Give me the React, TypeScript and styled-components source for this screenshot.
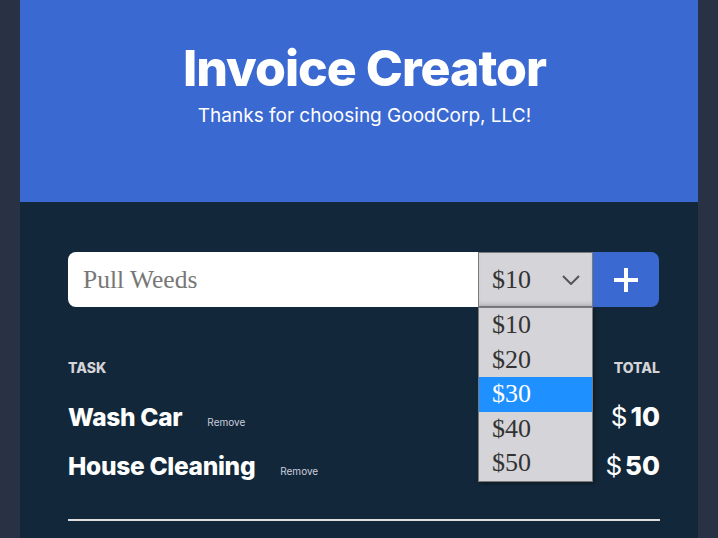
import React, { useState } from 'react';
import styled, { createGlobalStyle } from 'styled-components';

const GlobalStyle = createGlobalStyle`
    html, body {
        margin: 0;
        padding: 0;
        background: #283244;
        font-family: Inter, 'Noto Sans', sans-serif;
    }
`;

const Page = styled.div`
    width: 678px;
    height: 538px;
    margin: 0 auto;
    background: #12283a;
    overflow: hidden;
`;

const Header = styled.header`
    height: 202px;
    background: #3b69d2;
    color: #fff;
    display: flex;
    flex-direction: column;
    align-items: center;
    box-sizing: border-box;
    padding: 39px 0 0 11px;
`;

const Title = styled.h1`
    margin: 0;
    font-size: 50px;
    font-weight: 800;
    letter-spacing: -1px;
    line-height: 58px;
`;

const Subtitle = styled.p`
    margin: 7px 0 0;
    font-size: 19px;
    line-height: 24px;
`;

const Body = styled.main`
    padding: 50px 38px 0 48px;
`;

const Form = styled.div`
    display: flex;
    height: 55px;
    position: relative;
`;

const Input = styled.input`
    width: 410px;
    box-sizing: border-box;
    border: none;
    border-radius: 8px 0 0 8px;
    padding: 0 15px;
    font-family: 'Liberation Serif', serif;
    font-size: 25.5px;
    color: #222;
    outline: none;
    &::placeholder {
        color: #777;
    }
`;

const SelectBox = styled.div`
    position: relative;
    width: 115px;
    box-sizing: border-box;
    background: #d5d4d8;
    border: 1px solid #7a7a7a;
    box-shadow: inset 0 -4px 4px -2px rgba(0, 0, 0, 0.15);
    display: flex;
    align-items: center;
    justify-content: space-between;
    padding: 0 12px 0 13px;
    font-family: 'Liberation Serif', serif;
    font-size: 26px;
    color: #333;
`;

const Dropdown = styled.ul`
    position: absolute;
    top: 54px;
    left: -1px;
    width: 115px;
    box-sizing: border-box;
    margin: 0;
    padding: 0;
    list-style: none;
    background: #d5d4d8;
    border: 1px solid #7a7a7a;
    box-shadow: 2px 2px 4px rgba(0, 0, 0, 0.35);
    z-index: 2;
`;

const Option = styled.li<{ $active?: boolean }>`
    height: 34.6px;
    line-height: 33px;
    padding-left: 13px;
    font-family: 'Liberation Serif', serif;
    font-size: 26px;
    color: ${(p) => (p.$active ? '#fff' : '#333')};
    background: ${(p) => (p.$active ? '#1e90ff' : 'transparent')};
`;

const AddButton = styled.button`
    width: 66px;
    border: none;
    border-radius: 0 8px 8px 0;
    background: #3b69d2;
    display: flex;
    align-items: center;
    justify-content: center;
    padding: 0;
    cursor: pointer;
`;

const Table = styled.section`
    margin-top: 52px;
    width: 592px;
`;

const HeadRow = styled.div`
    display: flex;
    justify-content: space-between;
    font-size: 14px;
    font-weight: 800;
    color: #d4d4d8;
    margin-bottom: 25px;
`;

const Row = styled.div`
    display: flex;
    align-items: baseline;
    height: 49px;
    color: #fff;
`;

const TaskName = styled.span`
    font-size: 24.5px;
    font-weight: 800;
    letter-spacing: -0.3px;
`;

const RemoveLink = styled.button`
    margin-left: 25px;
    background: none;
    border: none;
    padding: 0;
    color: #ccd;
    font-family: Inter, sans-serif;
    font-size: 10px;
    cursor: pointer;
`;

const Price = styled.span`
    margin-left: auto;
    font-size: 26px;
    font-weight: 800;
`;

const Dollar = styled.span`
    font-weight: 400;
    margin-right: 3px;
`;

const Divider = styled.hr`
    margin: 20px 0 0;
    border: none;
    height: 2px;
    background: #ddd;
`;

const Chevron = () => (
    <svg width="18" height="10" viewBox="0 0 18 10" fill="none">
        <path d="M1 1l8 8 8-8" stroke="#555" strokeWidth="2" />
    </svg>
);

const Plus = () => (
    <svg width="26" height="26" viewBox="0 0 26 26">
        <rect x="11" y="1" width="4" height="24" fill="#fff" />
        <rect x="1" y="11" width="24" height="4" fill="#fff" />
    </svg>
);

const prices = [10, 20, 30, 40, 50];

const App: React.FC = () => {
    const [tasks, setTasks] = useState([
        { id: 1, label: 'Wash Car', total: 10 },
        { id: 2, label: 'House Cleaning', total: 50 },
    ]);

    return (
        <>
            <GlobalStyle />
            <Page>
                <Header>
                    <Title>Invoice Creator</Title>
                    <Subtitle>Thanks for choosing GoodCorp, LLC!</Subtitle>
                </Header>
                <Body>
                    <Form>
                        <Input placeholder='Pull Weeds' />
                        <SelectBox>
                            $10
                            <Chevron />
                            <Dropdown>
                                {prices.map((p) => (
                                    <Option key={p} $active={p === 30}>${p}</Option>
                                ))}
                            </Dropdown>
                        </SelectBox>
                        <AddButton>
                            <Plus />
                        </AddButton>
                    </Form>
                    <Table>
                        <HeadRow>
                            <span>TASK</span>
                            <span>TOTAL</span>
                        </HeadRow>
                        {tasks.map((task) => (
                            <Row key={task.id}>
                                <TaskName>{task.label}</TaskName>
                                <RemoveLink
                                    onClick={() => setTasks((t) => t.filter((x) => x.id !== task.id))}
                                >
                                    Remove
                                </RemoveLink>
                                <Price>
                                    <Dollar>$</Dollar>
                                    {task.total}
                                </Price>
                            </Row>
                        ))}
                        <Divider />
                    </Table>
                </Body>
            </Page>
        </>
    );
};

export default App;
